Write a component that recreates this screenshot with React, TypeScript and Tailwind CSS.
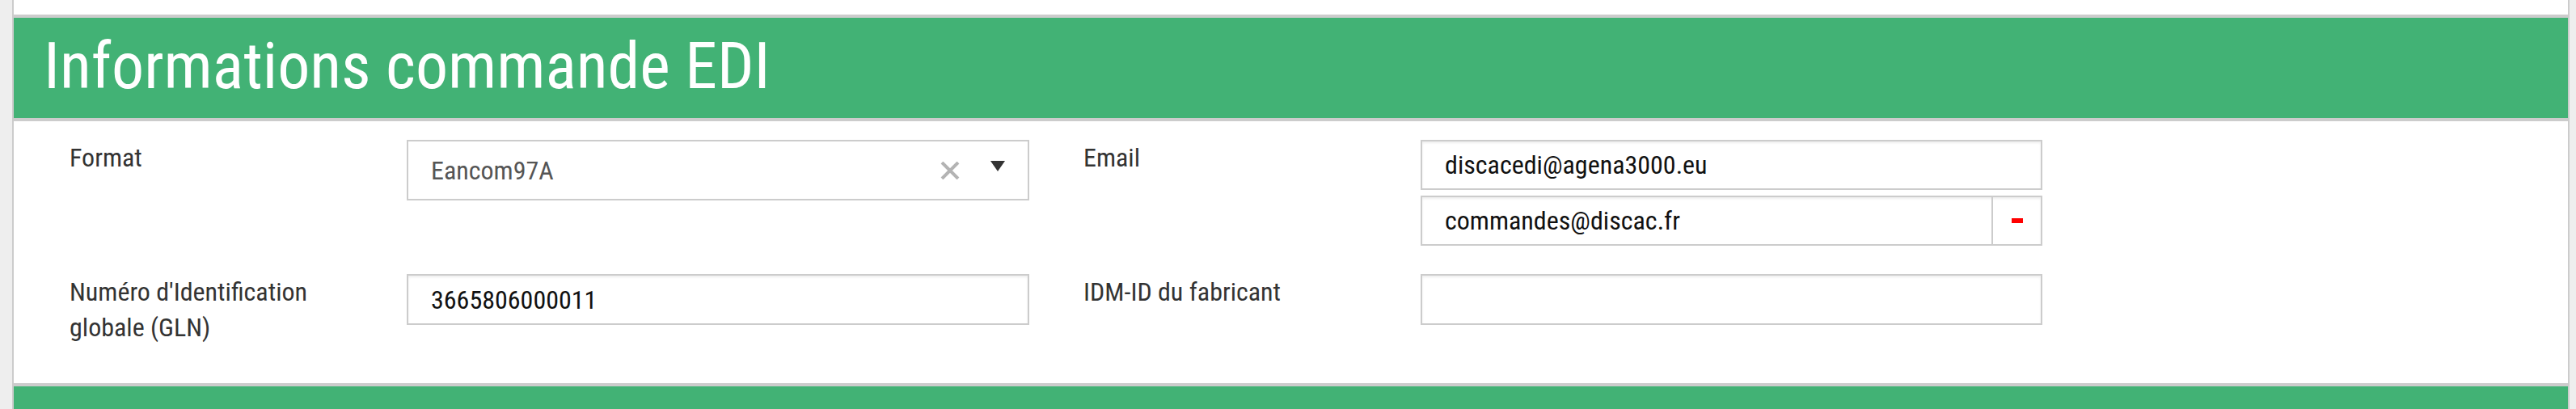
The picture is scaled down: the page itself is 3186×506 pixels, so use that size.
import { useState } from "react";

function ClearIcon() {
  return (
    <svg width="24" height="22" viewBox="0 0 24 22" className="shrink-0">
      <path d="M2 1l20 20M22 1L2 21" stroke="#b3b3b3" strokeWidth="4" />
    </svg>
  );
}

function CaretIcon() {
  return (
    <svg width="18" height="13" viewBox="0 0 18 13" className="shrink-0">
      <path d="M0 0h18L9 13z" fill="#333333" />
    </svg>
  );
}

function Label({ children }: { children: React.ReactNode }) {
  return (
    <div className="w-[417px] shrink-0 text-[32px] leading-[44px] text-[#333333]">
      {children}
    </div>
  );
}

function TextInput({ value, height = "h-[63px]" }: { value: string; height?: string }) {
  return (
    <div
      className={`flex items-center ${height} w-full border-2 border-[#cccccc] bg-white pl-[28px] text-[32px] text-[#111111] shadow-[inset_0_2px_3px_rgba(0,0,0,0.07)]`}
    >
      {value}
    </div>
  );
}

export default function App() {
  const [emails] = useState(["discacedi@agena3000.eu", "commandes@discac.fr"]);

  return (
    <div
      className="min-h-screen bg-[#eeeeee] pl-[15px] pr-[8px] font-stretch-[85%]"
      style={{ fontFamily: "Roboto, 'Noto Sans', sans-serif" }}
    >
      <div className="border-x-2 border-[#cccccc] bg-white">
        <div className="h-[18px]" />

        <div className="flex h-[132px] items-center border-y-4 border-[#cccccc] bg-[#42b275] pb-[4px] pl-[37px]">
          <h1 className="text-[80px] font-normal leading-none text-white">Informations commande EDI</h1>
        </div>

        <div className="flex flex-col gap-[35px] pb-[47px] pl-[69px] pt-[23px]">
          <div className="flex items-start">
            <Label>Format</Label>
            <div className="flex h-[75px] w-[770px] shrink-0 items-center border-2 border-[#cccccc] bg-white pl-[28px] pr-[28px]">
              <span className="flex-1 text-[32px] text-[#555555]">Eancom97A</span>
              <ClearIcon />
              <div className="ml-[38px] -mt-[10px]">
                <CaretIcon />
              </div>
            </div>
            <div className="w-[67px] shrink-0" />
            <Label>Email</Label>
            <div className="flex w-[769px] shrink-0 flex-col gap-[7px]">
              <TextInput value={emails[0]} height="h-[62px]" />
              <div className="flex h-[62px] border-2 border-[#cccccc] bg-white shadow-[inset_0_2px_3px_rgba(0,0,0,0.07)]">
                <div className="flex flex-1 items-center pl-[28px] text-[32px] text-[#111111]">{emails[1]}</div>
                <div className="flex w-[61px] items-center justify-center border-l-2 border-[#cccccc]">
                  <span className="block h-[6px] w-[14px] bg-[#ff0000]" />
                </div>
              </div>
            </div>
          </div>

          <div className="flex items-start">
            <Label>
              Numéro d'Identification
              <br />
              globale (GLN)
            </Label>
            <div className="w-[770px] shrink-0">
              <TextInput value="3665806000011" />
            </div>
            <div className="w-[67px] shrink-0" />
            <Label>IDM-ID du fabricant</Label>
            <div className="w-[769px] shrink-0">
              <TextInput value="" />
            </div>
          </div>
        </div>

        <div className="flex h-[60px] items-start overflow-hidden border-t-4 border-[#cccccc] bg-[#42b275] pl-[37px]">
          <h2 className="pt-[27px] text-[80px] font-normal leading-none text-white">Comptabilité</h2>
        </div>
      </div>
    </div>
  );
}
